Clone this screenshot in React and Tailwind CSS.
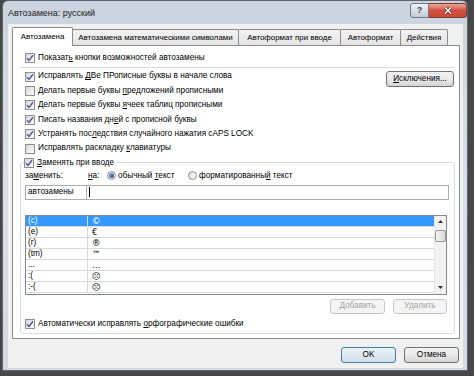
import React from "react";

// Флажок в стиле Windows 7
const Check = ({ checked }) => (
  <span className="w-[10px] h-[10px] shrink-0 border border-[#8e8f8f] bg-gradient-to-br from-[#d8d8d8] to-[#fbfbfb] flex items-center justify-center">
    {checked && (
      <svg width="8" height="8" viewBox="0 0 8 8">
        <path d="M1 4.3 L3 6.4 L7 1.2" fill="none" stroke="#4a5f9a" strokeWidth="1.5" />
      </svg>
    )}
  </span>
);

const CheckRow = ({ checked, children }) => (
  <div className="flex items-center gap-[3px] h-[14.4px] ml-[5px]">
    <Check checked={checked} />
    <span className="whitespace-nowrap">{children}</span>
  </div>
);

const Radio = ({ checked }) => (
  <span className="w-[9px] h-[9px] shrink-0 rounded-full border border-[#8e8f8f] bg-gradient-to-br from-[#dcdcdc] to-[#fbfbfb] flex items-center justify-center">
    {checked && <span className="w-[5px] h-[5px] rounded-full bg-gradient-to-br from-[#8fb0d8] to-[#1f3f7a]" />}
  </span>
);

const Button = ({ children, disabled, primary, className = "" }) => (
  <div
    className={`flex items-center justify-center rounded-[3px] border ${
      disabled
        ? "border-[#c4c7ca] bg-[#f4f4f4] text-[#a3a3a3]"
        : primary
        ? "border-[#3c7fb1] bg-gradient-to-b from-[#eaf2f8] to-[#d3dde6] text-black"
        : "border-[#707070] bg-gradient-to-b from-[#f4f4f4] via-[#e9e9e9] to-[#d5d5d5] text-black"
    } ${className}`}
  >
    {children}
  </div>
);

const tabs = [
  { label: "Автозамена математическими символами", w: "w-[167px]" },
  { label: "Автоформат при вводе", w: "w-[103px]" },
  { label: "Автоформат", w: "w-[61px]" },
  { label: "Действия", w: "w-[48px]" },
];

const rows = [
  ["(c)", "©"],
  ["(e)", "€"],
  ["(r)", "®"],
  ["(tm)", "™"],
  ["...", "…"],
  [":(", "☹"],
  [":-(", "☹"],
];

export default function App() {
  return (
    <div className="w-[474px] h-[376px] bg-[#474747] overflow-hidden font-['Liberation_Sans',Arial,sans-serif] text-[8.2px] text-black">
      <div className="ml-[2px] w-[466px] h-[371px] rounded-t-[6px] border border-[#5d6670] bg-gradient-to-b from-[#cbd4de] via-[#d8dfe7] to-[#d2d9e1] flex flex-col">
        {/* заголовок */}
        <div className="h-[23px] flex items-start">
          <span className="ml-[5px] mt-[6px] text-[9px] text-[#1a1a1a]">Автозамена: русский</span>
          <div className="ml-auto mt-[2px] flex">
            <div className="w-[19px] h-[15px] rounded-l-[3px] border border-[#6c7888] bg-gradient-to-b from-[#eef2f6] to-[#c3ccd7] flex items-center justify-center text-[9px] font-bold text-[#3a4a62]">
              ?
            </div>
            <div className="w-[38px] h-[15px] rounded-r-[3px] border border-l-0 border-[#7a3a32] bg-gradient-to-b from-[#e9a899] via-[#d2503f] to-[#c84a36] flex items-center justify-center">
              <svg width="10" height="9" viewBox="0 0 10 9">
                <path d="M2 1.5 L8 7.5 M8 1.5 L2 7.5" stroke="#5a1f18" strokeWidth="3" />
                <path d="M2 1.5 L8 7.5 M8 1.5 L2 7.5" stroke="#ffffff" strokeWidth="1.6" />
              </svg>
            </div>
          </div>
        </div>

        {/* клиентская область */}
        <div className="ml-[5px] w-[455px] h-[344px] bg-[#f0f0f0] pt-[3px] pl-[4px] pr-[3px] flex flex-col">
          {/* вкладки */}
          <div className="flex items-end h-[18px] text-[7.9px]">
            <div className="w-[61px] h-[19px] -mb-[1px] relative z-10 bg-white border border-b-0 border-[#898c95] rounded-t-[2px] flex items-center justify-center">
              Автозамена
            </div>
            {tabs.map((t) => (
              <div
                key={t.label}
                className={`${t.w} h-[16px] -ml-[1px] border border-b-0 border-[#898c95] rounded-t-[2px] bg-gradient-to-b from-[#f3f3f3] to-[#e4e4e4] flex items-center justify-center whitespace-nowrap overflow-hidden`}
              >
                {t.label}
              </div>
            ))}
          </div>

          {/* панель */}
          <div className="w-[448px] h-[294px] border border-[#898c95] bg-white pl-[7px] pr-[4px] flex flex-col">
            <div className="mt-[5px]">
              <CheckRow checked>
                Показат<u>ь</u> кнопки возможностей автозамены
              </CheckRow>
            </div>
            <div className="mt-[2px] h-px bg-[#dcdcdc]" />
            <div className="mt-[1px] flex">
              <div className="flex flex-col">
                <CheckRow checked>
                  Исправлять <u>Д</u>Ве ПРописные буквы в начале слова
                </CheckRow>
                <CheckRow>
                  Делать первые буквы <u>п</u>редложений прописными
                </CheckRow>
                <CheckRow checked>
                  Делать первые буквы <u>я</u>чеек таблиц прописными
                </CheckRow>
                <CheckRow checked>
                  Писать названия дн<u>е</u>й с прописной буквы
                </CheckRow>
                <CheckRow checked>
                  Устранять пос<u>л</u>едствия случайного нажатия cAPS LOCK
                </CheckRow>
                <CheckRow>
                  Исправлять раскладку <u>к</u>лавиатуры
                </CheckRow>
              </div>
              <Button className="ml-auto mr-[1px] mt-[2px] w-[68px] h-[16px]">
                <span>
                  <u>И</u>сключения...
                </span>
              </Button>
            </div>

            {/* группа «Заменять при вводе» */}
            <div className="relative mt-[6px] h-[172px] border border-[#d5dde3] rounded-[3px] pl-[4px] pr-[5px] flex flex-col">
              <div className="absolute -top-[7px] left-[3px] bg-white pr-[2px] flex items-center gap-[3px] h-[14px]">
                <Check checked />
                <span>
                  <u>З</u>аменять при вводе
                </span>
              </div>

              <div className="mt-[6px] h-[14px] flex items-center">
                <span className="w-[63px]">
                  за<u>м</u>енить:
                </span>
                <span className="w-[19px]">
                  <u>н</u>а:
                </span>
                <Radio checked />
                <span className="ml-[2px] w-[70px]">
                  обычный <u>т</u>екст
                </span>
                <Radio />
                <span className="ml-[2px]">
                  форматированны<u>й</u> текст
                </span>
              </div>

              <div className="mt-[2px] h-[15px] flex">
                <div className="w-[62px] border border-[#abadb3] bg-white flex items-center pl-[2px]">автозамены</div>
                <div className="flex-1 border border-l-0 border-[#abadb3] bg-white flex items-center pl-[2px]">
                  <span className="w-px h-[10px] bg-black" />
                </div>
              </div>

              <div className="mt-[15px] w-[422px] h-[80px] border border-[#828790] bg-white flex">
                <div className="flex-1 flex flex-col">
                  {rows.map(([a, b], i) => (
                    <div
                      key={a}
                      className={`h-[11.1px] flex border-b border-[#d9d9d9] leading-none ${
                        i === 0 ? "bg-[#3399ff] text-white border-[#3399ff]" : ""
                      }`}
                    >
                      <span className="w-[62px] border-r border-[#d9d9d9] pl-[2px] flex items-center">{a}</span>
                      <span className="pl-[4px] flex items-center font-['DejaVu_Sans',sans-serif] text-[8.5px]">{b}</span>
                    </div>
                  ))}
                </div>
                <div className="w-[12px] bg-[#f2f2f2] border-l border-[#e6e6e6] flex flex-col items-center">
                  <svg className="mt-[4px]" width="5" height="3" viewBox="0 0 5 3">
                    <path d="M0 3 L2.5 0 L5 3 Z" fill="#333" />
                  </svg>
                  <div className="mt-[7px] w-[11px] h-[12px] rounded-[2px] border border-[#9a9a9a] bg-gradient-to-r from-[#f4f4f4] to-[#dadada]" />
                  <svg className="mt-auto mb-[5px]" width="5" height="3" viewBox="0 0 5 3">
                    <path d="M0 0 L2.5 3 L5 0 Z" fill="#333" />
                  </svg>
                </div>
              </div>

              <div className="mt-[4px] w-[422px] flex justify-end gap-[8px]">
                <Button disabled className="w-[55px] h-[15px]">
                  Добавить
                </Button>
                <Button disabled className="w-[54px] h-[15px]">
                  Удалить
                </Button>
              </div>

              <div className="mt-[3px] h-[14px] flex items-center gap-[3px]">
                <Check checked />
                <span>
                  Автоматически исправлять <u>о</u>рфографические ошибки
                </span>
              </div>
            </div>
          </div>

          {/* кнопки диалога */}
          <div className="mt-[8px] flex justify-end gap-[8px] pr-[1px]">
            <Button primary className="w-[55px] h-[16px]">
              OK
            </Button>
            <Button className="w-[55px] h-[16px]">Отмена</Button>
          </div>
        </div>
      </div>
    </div>
  );
}
